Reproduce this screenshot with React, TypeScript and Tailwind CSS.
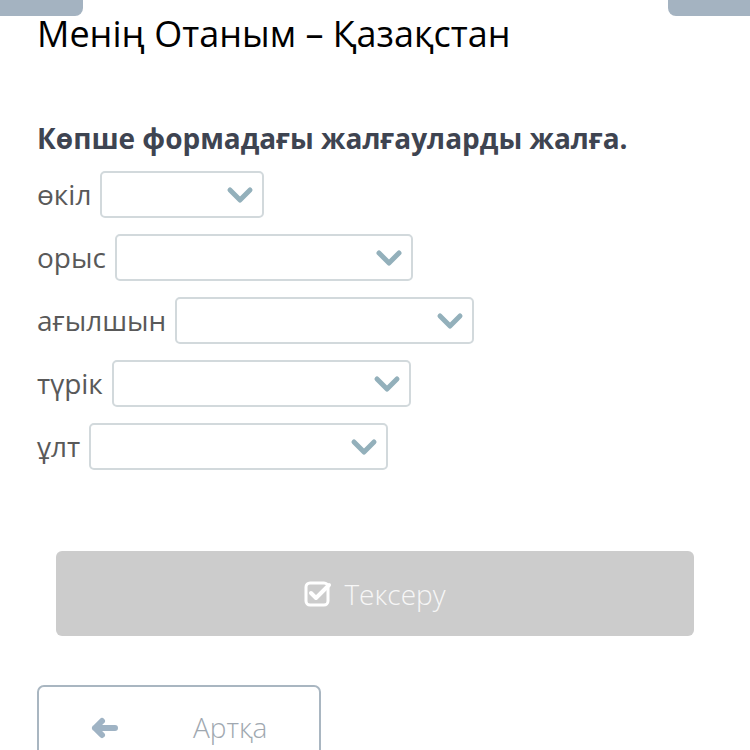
const rows = [
  { label: "өкіл", width: "w-[164px]" },
  { label: "орыс", width: "w-[298px]" },
  { label: "ағылшын", width: "w-[299px]" },
  { label: "түрік", width: "w-[299px]" },
  { label: "ұлт", width: "w-[299px]" },
];

function Chevron() {
  return (
    <svg width="28" height="18" viewBox="0 0 28 18" fill="none">
      <path d="M4 4l10 10L24 4" stroke="#93b0bb" strokeWidth="5" strokeLinecap="round" strokeLinejoin="round" />
    </svg>
  );
}

function CheckSquare() {
  return (
    <svg width="28" height="28" viewBox="0 0 28 28" fill="none">
      <rect x="2" y="3" width="22" height="22" rx="4" stroke="white" strokeWidth="3" />
      <path d="M7 13l5 5L25 5" stroke="white" strokeWidth="4" strokeLinecap="round" strokeLinejoin="round" />
    </svg>
  );
}

export default function App() {
  return (
    <div className="relative w-[750px] h-[750px] overflow-hidden bg-white font-['Open_Sans',sans-serif]">
      {/* top tabs */}
      <div className="flex justify-between">
        <div className="w-[83px] h-[16px] bg-[#a4b3c1] rounded-br-[8px]" />
        <div className="w-[82px] h-[16px] bg-[#a4b3c1] rounded-bl-[8px]" />
      </div>

      <div className="pl-[37px]">
        <h1 className="text-[36px] leading-[42px] text-black mt-[-3px]">
          Менің Отаным – Қазақстан
        </h1>

        <p className="mt-[66px] text-[28px] leading-[34px] font-bold text-[#3e4451]">
          Көпше формадағы жалғауларды жалға.
        </p>

        <div className="mt-[16px] flex flex-col gap-[16px]">
          {rows.map((r) => (
            <div key={r.label} className="flex items-center gap-[9px]">
              <span className="text-[28px] leading-[47px] text-[#595959]">{r.label}</span>
              <div
                className={`${r.width} h-[47px] border-2 border-[#d2d9dc] rounded-[5px] flex items-center justify-end pr-[8px]`}
              >
                <Chevron />
              </div>
            </div>
          ))}
        </div>
      </div>

      <div className="px-[56px] mt-[81px]">
        <div className="h-[85px] bg-[#cccccc] rounded-[6px] flex items-center justify-center gap-[12px]">
          <CheckSquare />
          <span className="text-[28px] text-[#f7f7f7] font-light">Тексеру</span>
        </div>
      </div>

      <div className="pl-[37px] mt-[49px]">
        <div className="w-[284px] h-[80px] border-2 border-[#a9b6c1] rounded-[7px] flex items-start pt-[20px] pl-[51px]">
          <svg width="30" height="24" viewBox="0 0 30 24" className="mt-[9px]" fill="none">
            <path d="M5 12h20M12 5l-7 7 7 7" stroke="#9fb3c4" strokeWidth="6" strokeLinecap="round" strokeLinejoin="round" />
          </svg>
          <span className="ml-[73px] text-[28px] leading-[40px] text-[#a0a8b0] font-light">
            Артқа
          </span>
        </div>
      </div>
    </div>
  );
}
